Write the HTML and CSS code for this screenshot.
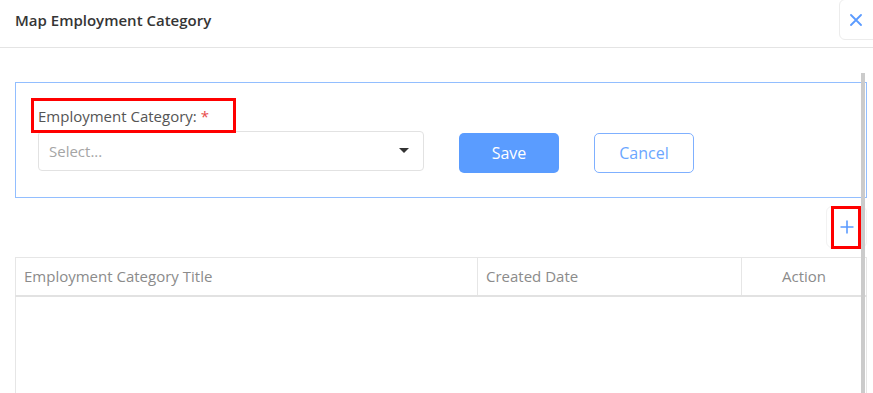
FILE: index.html
```html
<!DOCTYPE html>
<html lang="en">
<head>
  <meta charset="UTF-8">
  <title>Map Employment Category</title>
  <link rel="stylesheet" href="styles.css">
</head>
<body>
  <div class="modal">
    <div class="modal-header">
      <div class="modal-title">Map Employment Category</div>
      <button class="close-btn">
        <svg width="12" height="12" viewBox="0 0 12 12"><path d="M1 1L11 11M11 1L1 11" stroke="#5b9bff" stroke-width="1.8" stroke-linecap="round"/></svg>
      </button>
    </div>

    <div class="modal-body">
      <div class="form-card">
        <div class="field-label"><span class="marked">Employment Category: <span class="req">*</span></span></div>
        <div class="form-row">
          <div class="select">
            <span class="placeholder">Select...</span>
            <svg width="10" height="6" viewBox="0 0 10 6"><path d="M0 0H10L5 5Z" fill="#333"/></svg>
          </div>
          <button class="btn save">Save</button>
          <button class="btn cancel">Cancel</button>
        </div>
      </div>

      <div class="add-row">
        <button class="add-btn">
          <svg width="14" height="14" viewBox="0 0 14 14"><path d="M7 0.5V13.5M0.5 7H13.5" stroke="#5b9bff" stroke-width="1.6"/></svg>
        </button>
      </div>

      <table class="grid">
        <thead>
          <tr>
            <th class="col-title">Employment Category Title</th>
            <th class="col-date">Created Date</th>
            <th class="col-action">Action</th>
          </tr>
        </thead>
        <tbody>
          <tr><td colspan="3" class="empty"></td></tr>
        </tbody>
      </table>
    </div>

    <div class="scrollbar"></div>
  </div>
</body>
</html>
```

FILE: styles.css
```css
body {
  margin: 0;
  background: white;
  font-family: "Open Sans", Lato, sans-serif;
  color: #444;
  overflow: hidden;
}
.modal {
  position: relative;
  width: 873px;
  height: 393px;
  overflow: hidden;
}
.modal-header {
  height: 48px;
  border-bottom: 1px solid #e4e4e4;
  display: flex;
  align-items: flex-start;
  padding-left: 15px;
  box-sizing: border-box;
}
.modal-title {
  margin-top: 10px;
  font-size: 15px;
  font-weight: 600;
  line-height: 20px;
  color: #353535;
}
.close-btn {
  position: absolute;
  top: -1px;
  right: -6px;
  width: 40px;
  height: 41px;
  background: white;
  border: 1px solid #ececec;
  border-radius: 6px;
  display: flex;
  align-items: center;
  justify-content: center;
  padding: 0 6px 0 0;
}
.modal-body {
  padding: 34px 6px 0 15px;
}
.form-card {
  border: 1px solid #92beff;
  height: 116px;
  box-sizing: border-box;
  padding: 23px 0 0 22px;
}
.field-label {
  font-size: 15px;
  line-height: 20px;
  color: #555;
}
.marked {
  position: relative;
  display: inline-block;
}
.marked::after {
  content: "";
  position: absolute;
  left: -7px;
  right: -27px;
  top: -8px;
  bottom: -7px;
  border: 3px solid #f00;
}
.req {
  color: #e84a4a;
}
.form-row {
  display: flex;
  align-items: flex-start;
  gap: 35px;
  margin-top: 5px;
}
.select {
  width: 386px;
  height: 40px;
  box-sizing: border-box;
  border: 1px solid #e2e2e2;
  border-radius: 4px;
  display: flex;
  align-items: center;
  justify-content: space-between;
  padding: 0 14px 0 10px;
  font-size: 15px;
}
.placeholder {
  color: #a5a5a5;
}
.btn {
  margin-top: 2px;
  width: 100px;
  height: 40px;
  border-radius: 5px;
  font-family: "Open Sans", Lato, sans-serif;
  font-size: 16px;
  cursor: pointer;
}
.save {
  background: #5a9cff;
  border: none;
  color: white;
}
.cancel {
  background: white;
  border: 1px solid #7fb0ff;
  color: #6ba6ff;
}
.add-row {
  display: flex;
  justify-content: flex-end;
  margin-top: 8px;
  height: 42px;
}
.add-btn {
  position: relative;
  width: 41px;
  height: 42px;
  background: white;
  border: 1px solid #f2f2f2;
  border-radius: 6px;
  display: flex;
  align-items: center;
  justify-content: center;
  padding: 0;
}
.add-btn::after {
  content: "";
  position: absolute;
  left: 4px;
  top: -1px;
  width: 30px;
  height: 43px;
  box-sizing: border-box;
  border: 3px solid #f00;
}
.grid {
  margin-top: 9px;
  width: 852px;
  border-collapse: collapse;
  font-size: 15px;
}
.grid th {
  height: 35px;
  font-weight: normal;
  color: #8b8b8b;
  text-align: left;
  padding: 0 8px 2px;
  border: 1px solid #e6e6e6;
  border-bottom: 2px solid #e2e2e2;
}
.col-title { width: 445px; }
.col-date { width: 247px; }
.grid th.col-action { text-align: center; }
.empty {
  height: 120px;
  border: 1px solid #e6e6e6;
  border-top: none;
}
.scrollbar {
  position: absolute;
  left: 861px;
  top: 73px;
  width: 4px;
  height: 330px;
  background: #cbcbcb;
}
```
